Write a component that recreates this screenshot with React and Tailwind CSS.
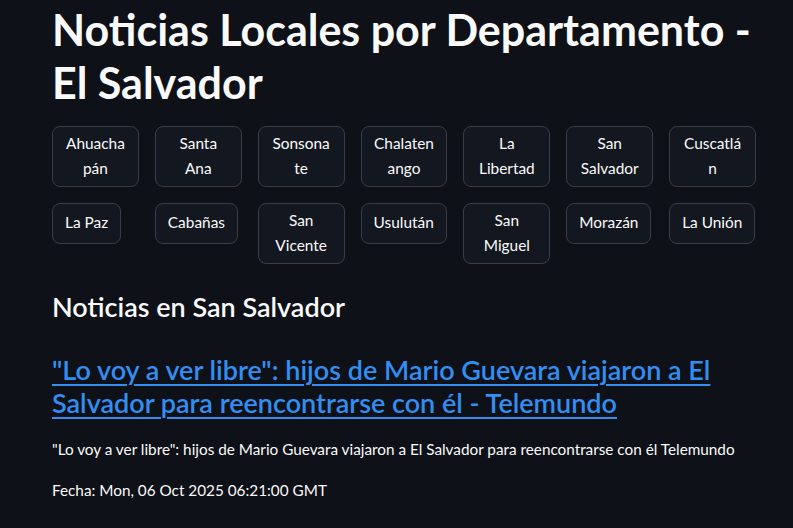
import React from "react";

const rows = [
  [["Ahuacha", "pán"], ["Santa", "Ana"], ["Sonsona", "te"], ["Chalaten", "ango"], ["La", "Libertad"], ["San", "Salvador"], ["Cuscatlá", "n"]],
  [["La Paz"], ["Cabañas"], ["San", "Vicente"], ["Usulután"], ["San", "Miguel"], ["Morazán"], ["La Unión"]],
];

function DeptButton({ lines }) {
  const wrapped = lines.length > 1;
  return (
    <button
      className={
        wrapped
          ? "min-h-[41px] w-full rounded-lg border border-[#3a3d45] bg-[#131720] px-3 py-1 text-center text-[15.4px] leading-[25.6px] text-[#fafafa]"
          : "min-h-[41px] whitespace-nowrap rounded-lg border border-[#3a3d45] bg-[#131720] px-3 py-1 text-center text-[15.4px] leading-[25.6px] text-[#fafafa]"
      }
    >
      {lines.map((l, i) => (
        <div key={i}>{l}</div>
      ))}
    </button>
  );
}

export default function App() {
  return (
    <div className="min-h-[528px] bg-[#0e1117] text-[#fafafa]" style={{ fontFamily: "Lato, 'Noto Sans', sans-serif" }}>
      <div className="ml-[52px] w-[704px] pt-[4px]">
        <h1 className="text-[43px] font-bold leading-[52.8px]">
          Noticias Locales por Departamento - El Salvador
        </h1>

        <div className="mt-[16px] flex flex-col gap-4">
          {rows.map((row, r) => (
            <div key={r} className="grid grid-cols-7 gap-4 items-start">
              {row.map((lines, i) => (
                <div key={i}>
                  <DeptButton lines={lines} />
                </div>
              ))}
            </div>
          ))}
        </div>

        <h3 className="mt-[23px] text-[27px] font-semibold leading-[40px]">Noticias en San Salvador</h3>

        <h3 className="mt-[26px] text-[27px] font-semibold leading-[33px]">
          <a href="#" className="text-[#338ef2] underline decoration-[2px] underline-offset-[4px]">
            "Lo voy a ver libre": hijos de Mario Guevara viajaron a El Salvador para reencontrarse con él - Telemundo
          </a>
        </h3>

        <p className="mt-[18px] text-[15.3px] leading-[24px]">
          "Lo voy a ver libre": hijos de Mario Guevara viajaron a El Salvador para reencontrarse con él Telemundo
        </p>
        <p className="mt-[17px] text-[15.3px] leading-[24px]">Fecha: Mon, 06 Oct 2025 06:21:00 GMT</p>
      </div>
    </div>
  );
}
